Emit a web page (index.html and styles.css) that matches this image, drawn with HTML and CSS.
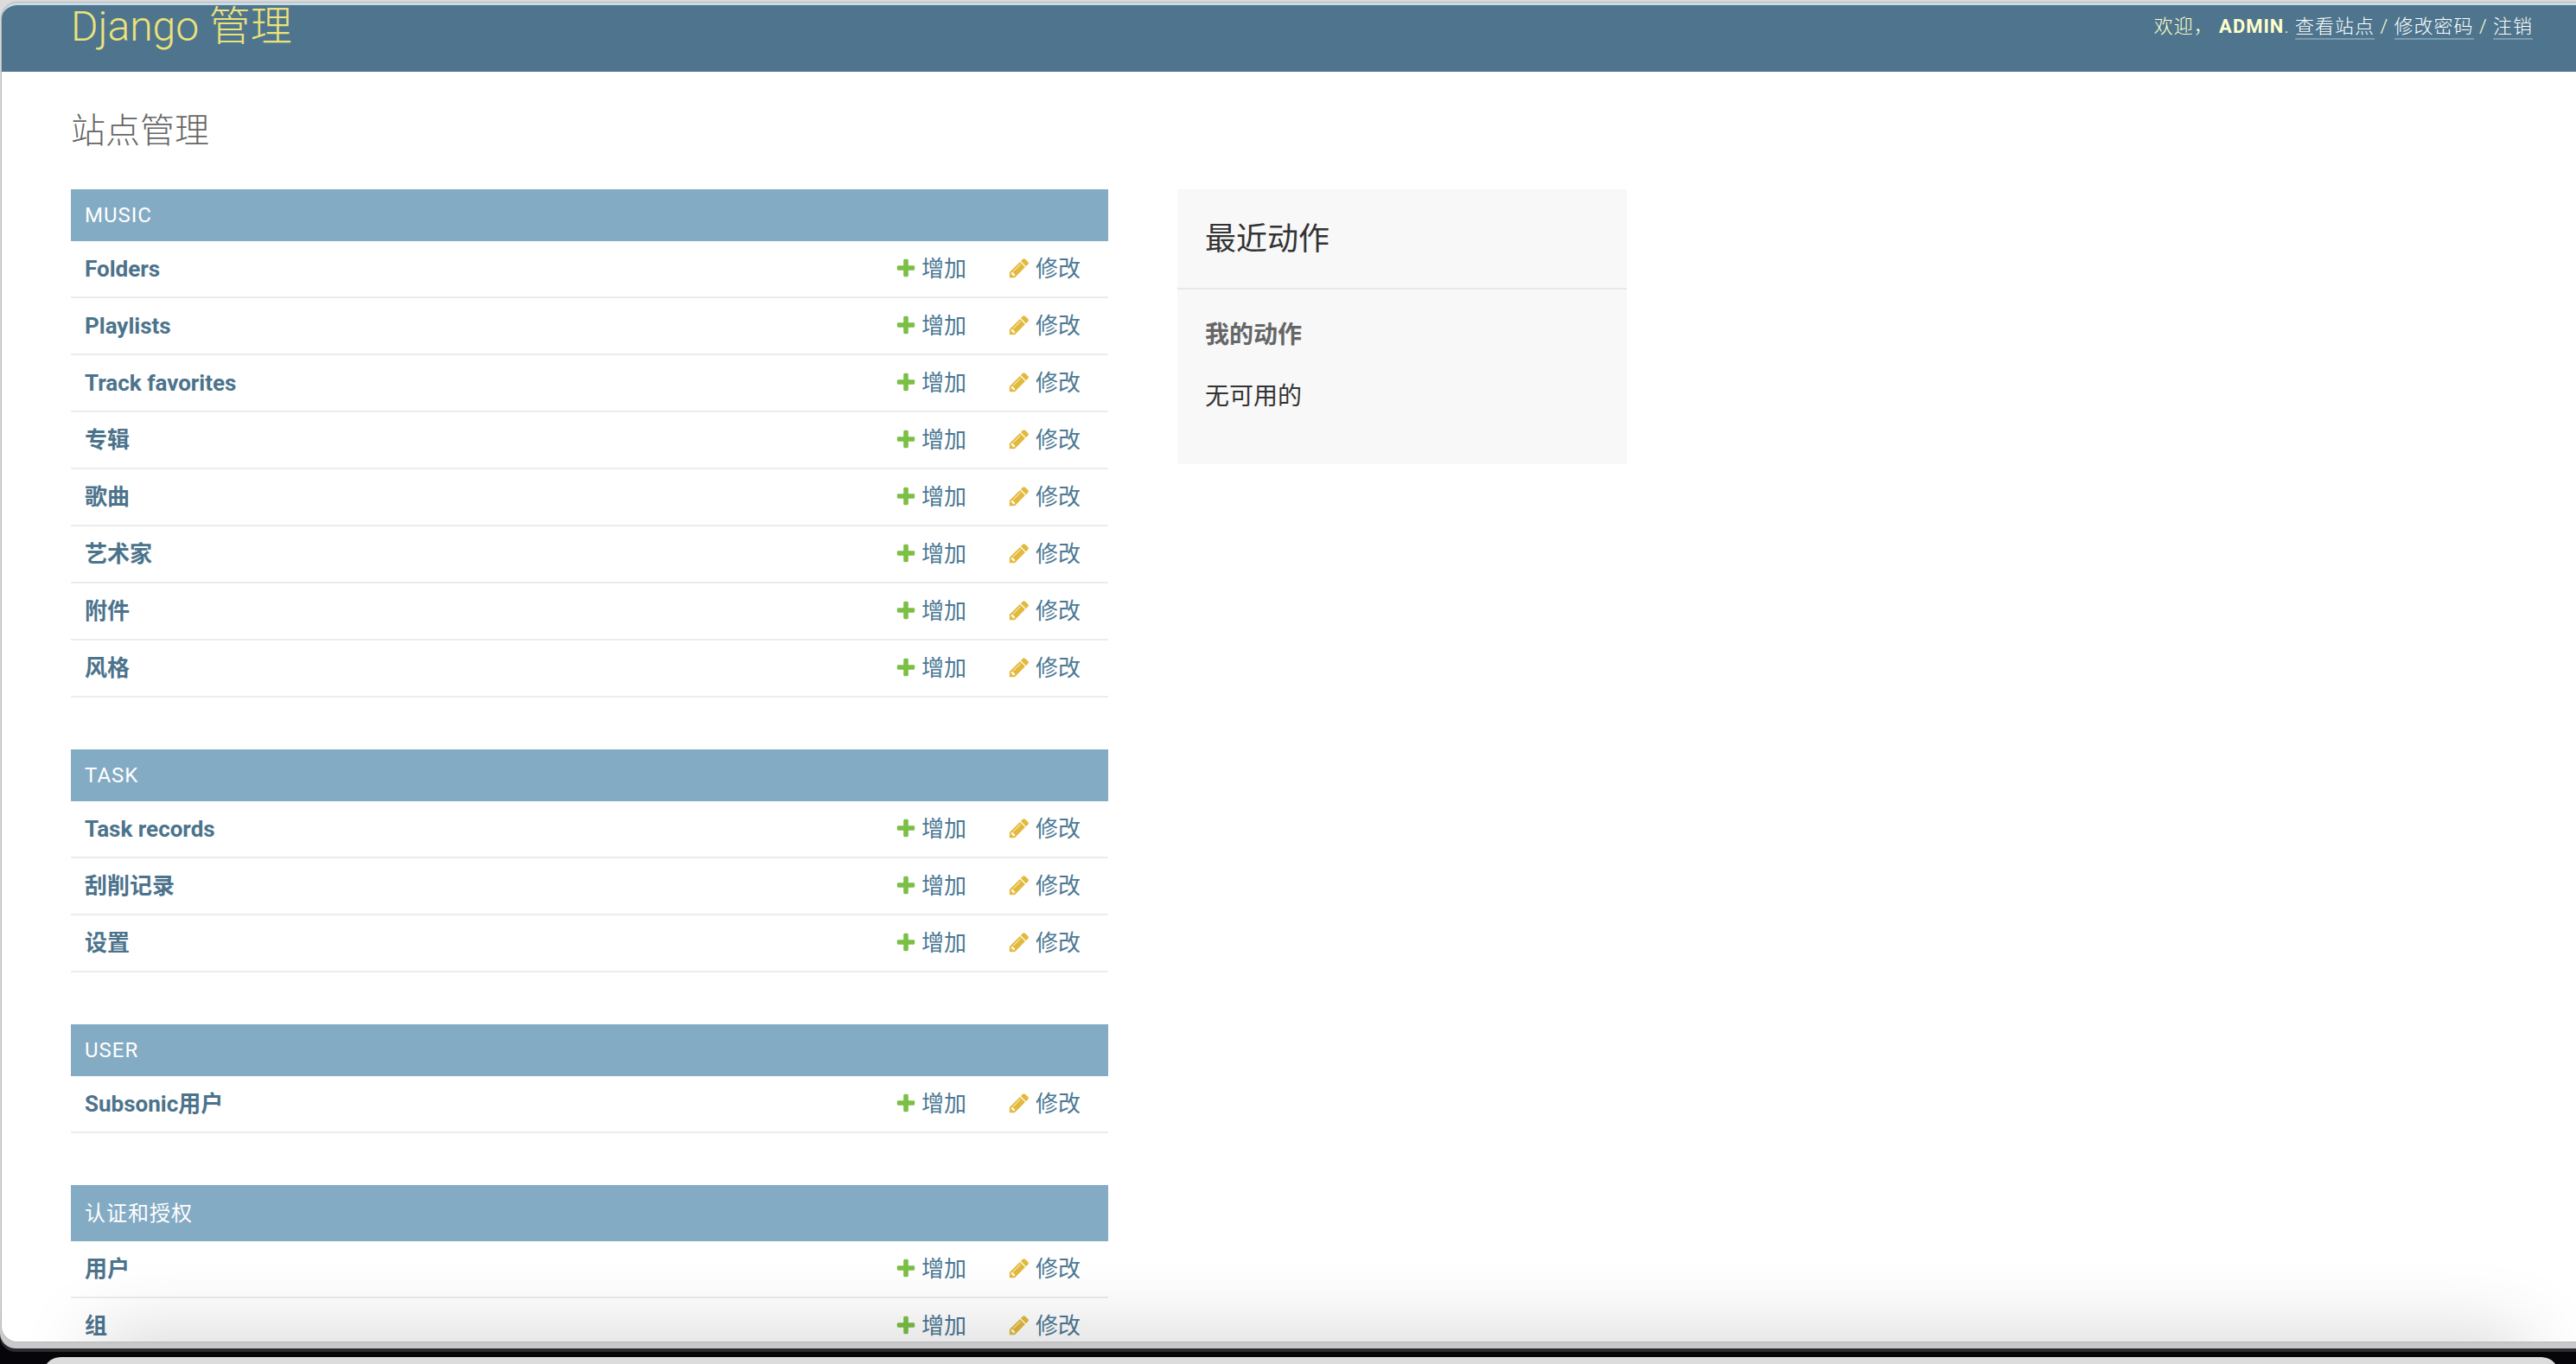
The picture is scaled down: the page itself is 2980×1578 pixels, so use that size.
FILE: index.html
```html
<!DOCTYPE html>
<html lang="zh-hans">
  <head>
    <meta charset="UTF-8" />
    <title>站点管理 | Django 站点管理员</title>
    <link rel="stylesheet" href="styles.css">
  </head>
  <body>
    <svg class="sprite">
      <symbol id="icon-add" viewBox="0 0 1792 1792">
        <path d="M1600 796v192q0 40-28 68t-68 28h-416v416q0 40-28 68t-68 28h-192q-40 0-68-28t-28-68v-416h-416q-40 0-68-28t-28-68v-192q0-40 28-68t68-28h416v-416q0-40 28-68t68-28h192q40 0 68 28t28 68v416h416q40 0 68 28t28 68z"/>
      </symbol>
      <symbol id="icon-change" viewBox="0 0 1792 1792">
        <path d="M491 1536l91-91-235-235-91 91v107h128v128h107zm523-928q0-22-22-22-10 0-17 7l-542 542q-7 7-7 17 0 22 22 22 10 0 17-7l542-542q7-7 7-17zm-54-192l416 416-832 832h-416v-416zm683 96q0 53-37 90l-166 166-416-416 166-165q36-38 90-38 53 0 91 38l235 234q37 39 37 91z"/>
      </symbol>
    </svg>

    <div class="frame">
      <div class="window">
        <div id="header" class="header">
          <h1 class="site-name">Django 管理</h1>
          <div class="user-tools">
            <span class="welcome">欢迎，</span>
            <strong>admin</strong>.
            <a href="#">查看站点</a> /
            <a href="#">修改密码</a> /
            <a href="#">注销</a>
          </div>
        </div>

        <div class="content">
          <h1 class="title">站点管理</h1>
          <div class="columns">
            <div class="app-list">
              <div class="module">
                <div class="caption">Music</div>
                <div class="row">
                  <a class="name" href="#">Folders</a>
                  <a class="link add" href="#"><svg><use href="#icon-add"/></svg>增加</a>
                  <a class="link change" href="#"><svg><use href="#icon-change"/></svg>修改</a>
                </div>
                <div class="row">
                  <a class="name" href="#">Playlists</a>
                  <a class="link add" href="#"><svg><use href="#icon-add"/></svg>增加</a>
                  <a class="link change" href="#"><svg><use href="#icon-change"/></svg>修改</a>
                </div>
                <div class="row">
                  <a class="name" href="#">Track favorites</a>
                  <a class="link add" href="#"><svg><use href="#icon-add"/></svg>增加</a>
                  <a class="link change" href="#"><svg><use href="#icon-change"/></svg>修改</a>
                </div>
                <div class="row">
                  <a class="name" href="#">专辑</a>
                  <a class="link add" href="#"><svg><use href="#icon-add"/></svg>增加</a>
                  <a class="link change" href="#"><svg><use href="#icon-change"/></svg>修改</a>
                </div>
                <div class="row">
                  <a class="name" href="#">歌曲</a>
                  <a class="link add" href="#"><svg><use href="#icon-add"/></svg>增加</a>
                  <a class="link change" href="#"><svg><use href="#icon-change"/></svg>修改</a>
                </div>
                <div class="row">
                  <a class="name" href="#">艺术家</a>
                  <a class="link add" href="#"><svg><use href="#icon-add"/></svg>增加</a>
                  <a class="link change" href="#"><svg><use href="#icon-change"/></svg>修改</a>
                </div>
                <div class="row">
                  <a class="name" href="#">附件</a>
                  <a class="link add" href="#"><svg><use href="#icon-add"/></svg>增加</a>
                  <a class="link change" href="#"><svg><use href="#icon-change"/></svg>修改</a>
                </div>
                <div class="row">
                  <a class="name" href="#">风格</a>
                  <a class="link add" href="#"><svg><use href="#icon-add"/></svg>增加</a>
                  <a class="link change" href="#"><svg><use href="#icon-change"/></svg>修改</a>
                </div>
              </div>

              <div class="module">
                <div class="caption">Task</div>
                <div class="row">
                  <a class="name" href="#">Task records</a>
                  <a class="link add" href="#"><svg><use href="#icon-add"/></svg>增加</a>
                  <a class="link change" href="#"><svg><use href="#icon-change"/></svg>修改</a>
                </div>
                <div class="row">
                  <a class="name" href="#">刮削记录</a>
                  <a class="link add" href="#"><svg><use href="#icon-add"/></svg>增加</a>
                  <a class="link change" href="#"><svg><use href="#icon-change"/></svg>修改</a>
                </div>
                <div class="row">
                  <a class="name" href="#">设置</a>
                  <a class="link add" href="#"><svg><use href="#icon-add"/></svg>增加</a>
                  <a class="link change" href="#"><svg><use href="#icon-change"/></svg>修改</a>
                </div>
              </div>

              <div class="module">
                <div class="caption">User</div>
                <div class="row">
                  <a class="name" href="#">Subsonic用户</a>
                  <a class="link add" href="#"><svg><use href="#icon-add"/></svg>增加</a>
                  <a class="link change" href="#"><svg><use href="#icon-change"/></svg>修改</a>
                </div>
              </div>

              <div class="module">
                <div class="caption caption-cjk">认证和授权</div>
                <div class="row">
                  <a class="name" href="#">用户</a>
                  <a class="link add" href="#"><svg><use href="#icon-add"/></svg>增加</a>
                  <a class="link change" href="#"><svg><use href="#icon-change"/></svg>修改</a>
                </div>
                <div class="row">
                  <a class="name" href="#">组</a>
                  <a class="link add" href="#"><svg><use href="#icon-add"/></svg>增加</a>
                  <a class="link change" href="#"><svg><use href="#icon-change"/></svg>修改</a>
                </div>
              </div>
            </div>

            <div class="recent">
              <h2>最近动作</h2>
              <h3>我的动作</h3>
              <p>无可用的</p>
            </div>
          </div>
        </div>
        <div class="shade"></div>
      </div>
    </div>
    <div class="next-window"></div>
  </body>
</html>
```

FILE: styles.css
```css
* {
  box-sizing: border-box;
}

body {
  margin: 0;
  height: 1578px;
  overflow: hidden;
  background: #06050a;
  color: #333;
  font-family: Roboto, "Noto Sans CJK SC", sans-serif;
  font-size: 26px;
}

h1,
h2,
h3,
p {
  margin: 0;
}

a {
  color: #4c7893;
  text-decoration: none;
}

.sprite {
  display: none;
}

/* Outer browser frame */
.frame {
  height: 1560px;
  padding: 3px 0 8px 2px;
  background: linear-gradient(#dcdcdc 1500px, #c8c9cb 1552px);
  border-radius: 0 0 0 18px;
  box-shadow: 0 4px 0 #2b2b2d;
}

.window {
  position: relative;
  height: 1549px;
  overflow: hidden;
  background: #fff;
  border-top: 3px solid #c9dbe6;
  border-radius: 18px 0 0 18px;
  box-shadow: 0 0 1px 1px #b9b9bb;
}

.header {
  display: flex;
  justify-content: space-between;
  height: 77px;
  padding: 0 50px 0 80px;
  background: #4e758d;
  color: #ffc;
}

.site-name {
  margin-top: -10px;
  color: #ece27a;
  font-size: 48px;
  font-weight: 300;
  line-height: 70px;
}

.user-tools {
  padding-top: 9px;
  font-size: 22px;
  font-weight: 300;
  line-height: 31px;
  letter-spacing: 1px;
  text-transform: uppercase;
}

.user-tools strong {
  font-weight: 700;
}

.user-tools a {
  display: inline-block;
  height: 31px;
  border-bottom: 2px solid #7b9bb0;
  color: #fff;
}

.content {
  padding: 39px 80px;
}

.title {
  margin-bottom: 37px;
  color: #666;
  font-size: 40px;
  font-weight: 300;
  line-height: 60px;
}

.columns {
  display: flex;
  align-items: flex-start;
  gap: 80px;
}

.app-list {
  display: flex;
  flex-direction: column;
  gap: 60px;
  width: 1200px;
}

.caption {
  height: 60px;
  padding: 0 16px;
  background: #84abc4;
  color: #fff;
  font-size: 24px;
  line-height: 60px;
  letter-spacing: 1px;
  text-transform: uppercase;
}

.caption-cjk {
  height: 65px;
  line-height: 66px;
}

.row {
  display: flex;
  align-items: center;
  height: 66px;
  padding: 0 32px 0 16px;
  border-bottom: 2px solid #ececec;
  line-height: 30px;
}

.name {
  flex: 1;
  color: #4c738c;
  font-weight: 700;
}

.link {
  display: flex;
  align-items: center;
  gap: 6px;
}

.link svg {
  width: 26px;
  height: 26px;
  margin-bottom: 3px;
}

.add {
  gap: 5px;
  margin-right: 48px;
}

.add svg {
  fill: #7bbf45;
}

.change svg {
  fill: #e3b93c;
}

.recent {
  width: 520px;
  height: 318px;
  background: #f8f8f8;
  font-size: 28px;
}

.recent h2 {
  height: 116px;
  padding: 0 32px;
  border-bottom: 2px solid #e8e8e8;
  font-size: 36px;
  font-weight: 400;
  line-height: 117px;
}

.recent h3 {
  margin-top: 32px;
  padding: 0 32px;
  color: #666;
  font-size: 28px;
  font-weight: 700;
  line-height: 42px;
}

.recent p {
  margin-top: 29px;
  padding: 0 32px;
  line-height: 42px;
}

/* Shadow cast upward by the window below */
.shade {
  position: absolute;
  left: 110px;
  right: 60px;
  bottom: -60px;
  height: 60px;
  box-shadow: 0 0 90px rgba(0, 0, 0, 0.22);
}

.next-window {
  height: 40px;
  margin: 10px 20px 0 50px;
  background: #dcdcdc;
  border-radius: 20px;
}
```
